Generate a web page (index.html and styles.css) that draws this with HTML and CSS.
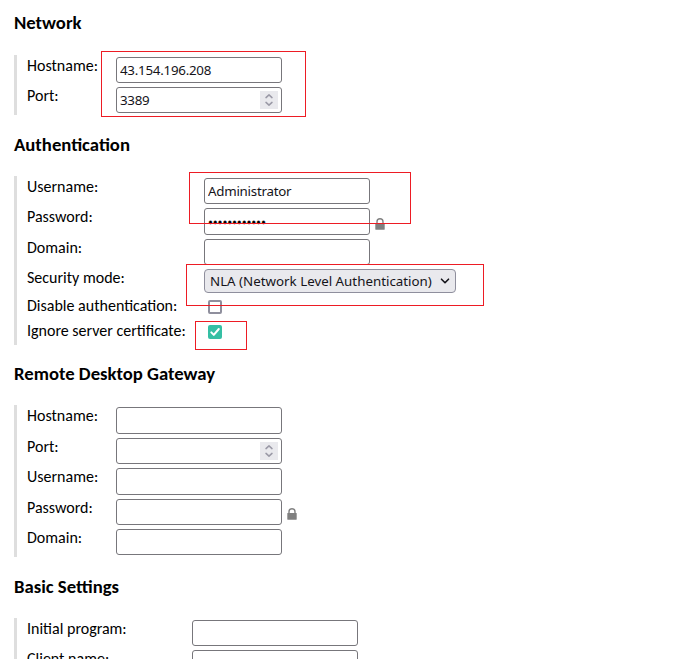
FILE: index.html
```
<!DOCTYPE html>
<html lang="en">
<head>
<meta charset="utf-8">
<title>Edit Connection</title>
<link rel="stylesheet" href="styles.css">
</head>
<body>
<svg class="defs" width="0" height="0">
  <symbol id="lock" viewBox="0 0 10 12"><path d="M2 6V3.8a3 3 0 0 1 6 0V6" fill="none" stroke="#808080" stroke-width="1.4"/><rect x="0.3" y="5" width="9.4" height="6.7" rx=".4" fill="#808080"/></symbol>
  <symbol id="spin" viewBox="0 0 18 18"><path d="M6 6.6 9 3.9l3 2.7M6 11.4l3 2.7 3-2.7" fill="none" stroke="#9a99a6" stroke-width="1.5" stroke-linecap="round" stroke-linejoin="round"/></symbol>
</svg>
<main class="page">
  <section class="group">
    <h3 class="title first">Network</h3>
    <div class="fields narrow">
      <div class="row"><label class="label">Hostname:</label><input class="field" type="text" value="43.154.196.208"></div>
      <div class="row"><label class="label">Port:</label><span class="number"><input class="field" type="text" value="3389"><svg class="spinner"><use href="#spin"/></svg></span></div>
    </div>
  </section>
  <section class="group">
    <h3 class="title auth">Authentication</h3>
    <div class="fields wide">
      <div class="row"><label class="label">Username:</label><input class="field" type="text" value="Administrator"></div>
      <div class="row"><label class="label">Password:</label><input class="field tall secret" type="text" value="••••••••••••"><svg class="lock"><use href="#lock"/></svg></div>
      <div class="row late"><label class="label">Domain:</label><input class="field" type="text"></div>
      <div class="row select-row"><label class="label">Security mode:</label><div class="select"><span>NLA (Network Level Authentication)</span><svg class="chevron" viewBox="0 0 10 10"><path d="M1.5 3.2 5 6.7l3.5-3.5" fill="none" stroke="#15141a" stroke-width="1.6" stroke-linecap="round" stroke-linejoin="round"/></svg></div></div>
      <div class="row check-row"><label class="label">Disable authentication:</label><span class="check"></span></div>
      <div class="row check-row"><label class="label">Ignore server certificate:</label><span class="check checked"><svg viewBox="0 0 14 14"><path d="M3.3 7.4 5.8 9.9 10.8 4" fill="none" stroke="#fff" stroke-width="2" stroke-linecap="round" stroke-linejoin="round"/></svg></span></div>
    </div>
  </section>
  <section class="group">
    <h3 class="title short">Remote Desktop Gateway</h3>
    <div class="fields narrow">
      <div class="row"><label class="label">Hostname:</label><input class="field tall" type="text"></div>
      <div class="row late"><label class="label">Port:</label><span class="number"><input class="field" type="text"><svg class="spinner"><use href="#spin"/></svg></span></div>
      <div class="row"><label class="label">Username:</label><input class="field tall" type="text"></div>
      <div class="row late"><label class="label">Password:</label><input class="field" type="text"><svg class="lock high"><use href="#lock"/></svg></div>
      <div class="row"><label class="label">Domain:</label><input class="field" type="text"></div>
    </div>
  </section>
  <section class="group">
    <h3 class="title">Basic Settings</h3>
    <div class="fields medium">
      <div class="row"><label class="label">Initial program:</label><input class="field" type="text"></div>
      <div class="row"><label class="label">Client name:</label><input class="field" type="text"></div>
    </div>
  </section>
  <div class="mark mark-host"></div>
  <div class="mark mark-user"></div>
  <div class="mark mark-mode"></div>
  <div class="mark mark-cert"></div>
</main>
</body>
</html>
```

FILE: styles.css
```
* { box-sizing: border-box; }
body { margin: 0; background: #fff; color: #000; font-family: Carlito, Lato, sans-serif; }
.defs { position: absolute; }
.page { position: relative; height: 659px; overflow: hidden; padding-left: 14px; }
.title { margin: 0; height: 61px; padding-top: 19px; font-size: 18.72px; line-height: 22px; font-weight: 700; white-space: nowrap; }
.title.first { height: 55px; padding-top: 12px; }
.title.short { height: 60px; padding-top: 18px; }
.fields { border-left: 3px solid #dedede; padding-left: 10px; }
.row { display: flex; align-items: flex-start; height: 30px; }
.row.late { padding-top: 1px; height: 31px; }
.row.select-row { height: 28px; }
.row.check-row { height: 25px; }
.label { flex: none; font-size: 16px; line-height: 20px; padding-top: 1px; white-space: nowrap; }
.narrow .label { width: 89px; }
.wide .label { width: 177px; }
.medium .label { width: 165px; }
.field { flex: none; width: 166px; height: 26px; margin: 2px 0 0; padding: 0 3px; border: 1px solid #77767b; border-radius: 3px; background: #fff; color: #15141a; font: 13.33px "Noto Sans", sans-serif; letter-spacing: -.25px; outline: 0; }
.field.tall { height: 27px; }
.field.secret { letter-spacing: -.2px; color: #000; -webkit-text-stroke: .3px #000; }
.number { position: relative; height: 28px; }
.number .field { display: block; }
.spinner { position: absolute; left: 144px; top: 6px; width: 18px; height: 18px; background: #e9e9ed; }
.lock { width: 10px; height: 12px; margin: 12px 0 0 5px; }
.lock.high { margin-top: 11px; }
.select { display: flex; justify-content: space-between; align-items: center; width: 252px; height: 24px; margin-top: 2px; padding: 0 5px; border: 1px solid #8f8f9d; border-radius: 4px; background: #e9e9ed; color: #15141a; font: 13.33px "Noto Sans", sans-serif; white-space: nowrap; }
.chevron { width: 10px; height: 10px; }
.check { width: 14px; height: 14px; margin: 5px 0 0 4px; border: 2px solid #8f8f9d; border-radius: 2px; }
.checked { border: 0; background: #35bfa4; }
.checked svg { display: block; width: 14px; height: 14px; }
.mark { position: absolute; border: 1px solid #ed1c24; }
.mark-host { left: 101px; top: 51px; width: 205px; height: 66px; }
.mark-user { left: 189px; top: 172px; width: 222px; height: 52px; }
.mark-mode { left: 186px; top: 264px; width: 298px; height: 42px; }
.mark-cert { left: 195px; top: 321px; width: 52px; height: 29px; }
```
